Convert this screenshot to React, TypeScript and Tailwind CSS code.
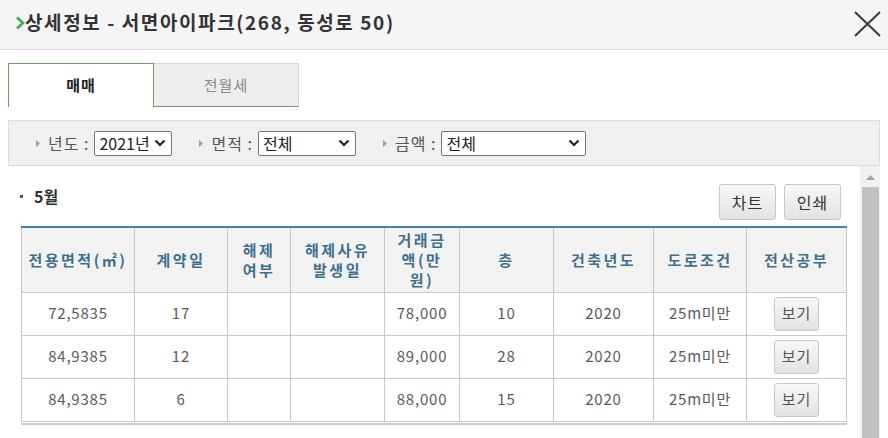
import React from "react";

const cols = [113, 93, 63, 94, 75, 94, 100, 93, 100];

const headers: React.ReactNode[] = [
  "전용면적(㎡)",
  "계약일",
  <>해제<br />여부</>,
  <>해제사유<br />발생일</>,
  <>거래금<br />액(만<br />원)</>,
  "층",
  "건축년도",
  "도로조건",
  "전산공부",
];

const rows = [
  ["72,5835", "17", "", "", "78,000", "10", "2020", "25m미만"],
  ["84,9385", "12", "", "", "89,000", "28", "2020", "25m미만"],
  ["84,9385", "6", "", "", "88,000", "15", "2020", "25m미만"],
];

function Tri() {
  return (
    <svg width="6" height="9" viewBox="0 0 6 9" className="mr-[7px]">
      <path d="M1 1 L5 4.5 L1 8 Z" fill="#a0a0a0" />
    </svg>
  );
}

function Chevron() {
  return (
    <svg width="12" height="8" viewBox="0 0 12 8">
      <path d="M1.5 1.5 L6 6 L10.5 1.5" fill="none" stroke="#222" strokeWidth="2.2" />
    </svg>
  );
}

function Select({ value, width }: { value: string; width: string }) {
  return (
    <div className={`${width} h-[25px] bg-white border border-[#767676] rounded-[2px] flex items-center justify-between pl-[4px] pr-[5px] text-[16px] text-[#222]`}>
      <span>{value}</span>
      <Chevron />
    </div>
  );
}

export default function App() {
  return (
    <div
      className="w-[888px] h-[438px] bg-white overflow-hidden flex flex-col"
      style={{ fontFamily: '"Noto Sans CJK KR", "Noto Sans", sans-serif' }}
    >
      {/* header */}
      <div className="h-[50px] shrink-0 bg-[#f5f5f7] border-b border-[#dcdcdc] flex items-center justify-between pl-[15px] pr-[6px]">
        <div className="flex items-center text-[19px] font-bold text-[#333] tracking-[1.6px] pb-[4px]">
          <svg width="10" height="14" viewBox="0 0 10 14">
            <path d="M2 1.5 L8 7 L2 12.5" fill="none" stroke="#3cae4b" strokeWidth="2.6" />
          </svg>
          <span>상세정보 - 서면아이파크(268, 동성로 50)</span>
        </div>
        <svg width="30" height="30" viewBox="0 0 30 30" className="mb-[2px]">
          <path d="M3 3 L28 27 M28 3 L3 27" stroke="#3a3a3a" strokeWidth="2" />
        </svg>
      </div>

      {/* body */}
      <div className="flex-1 flex flex-col pl-[8px] pr-[8px] pt-[13px] min-h-0">
        {/* tabs */}
        <div className="flex h-[44px] shrink-0">
          <div className="w-[146px] border-t border-l border-r border-[#6a9f5f] bg-white flex items-center justify-center text-[15px] font-bold text-[#222] tracking-[1px]">
            매매
          </div>
          <div className="w-[145px] bg-[#eeeeee] border-t border-r border-[#d6d6d6] border-b-[1px] border-b-[#6a9f5f] flex items-center justify-center text-[15px] text-[#888] tracking-[1px]">
            전월세
          </div>
        </div>

        {/* filter bar */}
        <div className="mt-[13px] h-[46px] shrink-0 bg-[#f0f0f0] border border-[#dcdcdc] flex items-center pl-[26px] text-[16px] text-[#555]">
          <div className="flex items-center">
            <Tri />
            <span className="mr-[5px] tracking-[1px]">년도 :</span>
            <Select value="2021년" width="w-[78px]" />
          </div>
          <div className="flex items-center ml-[26px]">
            <Tri />
            <span className="mr-[5px] tracking-[1px]">면적 :</span>
            <Select value="전체" width="w-[98px]" />
          </div>
          <div className="flex items-center ml-[26px]">
            <Tri />
            <span className="mr-[5px] tracking-[1px]">금액 :</span>
            <Select value="전체" width="w-[145px]" />
          </div>
        </div>

        {/* scroll area */}
        <div className="flex-1 flex min-h-0">
          <div className="flex-1 pl-[13px] pr-[6px] min-w-0">
            <div className="flex items-end justify-between h-[60px]">
              <div className="flex items-center self-start mt-[18px] text-[16px] font-bold text-[#333]">
                <span className="w-[3px] h-[3px] bg-[#555] mr-[11px] ml-[-1px]"></span>
                5월
              </div>
              <div className="flex gap-[8px] mb-[6px] pr-[13px]">
                {["차트", "인쇄"].map((t) => (
                  <div
                    key={t}
                    className="w-[57px] h-[36px] rounded-[3px] border border-[#c8c8c8] bg-gradient-to-b from-[#f8f8f8] to-[#e2e2e2] flex items-center justify-center text-[16px] text-[#333] tracking-[1px]"
                  >
                    {t}
                  </div>
                ))}
              </div>
            </div>
            <table className="border-collapse table-fixed w-[826px] border-t-[2px] border-t-[#3d86b4]">
              <colgroup>
                {cols.map((w, i) => (
                  <col key={i} style={{ width: w }} />
                ))}
              </colgroup>
              <thead>
                <tr className="h-[65px] bg-[#f2f2f2]">
                  {headers.map((h, i) => (
                    <th
                      key={i}
                      className="border border-[#c8c8c8] border-t-0 text-[15px] leading-[20px] font-bold text-[#3f6f8e] tracking-[2.5px] px-0"
                    >
                      {h}
                    </th>
                  ))}
                </tr>
              </thead>
              <tbody>
                {rows.map((r, ri) => (
                  <tr key={ri} className="h-[43px]">
                    {r.map((c, ci) => (
                      <td
                        key={ci}
                        className="border border-[#c8c8c8] text-center text-[15px] text-[#5a5a5a] tracking-[0.8px]"
                      >
                        {c}
                      </td>
                    ))}
                    <td className="border border-[#c8c8c8] text-center">
                      <div className="inline-flex w-[45px] h-[34px] rounded-[3px] border border-[#c8c8c8] bg-gradient-to-b from-[#f8f8f8] to-[#e2e2e2] items-center justify-center text-[15px] text-[#555] align-middle tracking-[1px]">
                        보기
                      </div>
                    </td>
                  </tr>
                ))}
              </tbody>
            </table>
            <div className="w-[826px] h-[2px] mt-[1px] bg-[#cccccc]"></div>
          </div>
          {/* scrollbar */}
          <div className="w-[20px] shrink-0 bg-[#f1f1f1] flex flex-col items-center">
            <div className="h-[21px] w-full flex items-center justify-center pt-[2px]">
              <svg width="9" height="5" viewBox="0 0 9 5">
                <path d="M0 5 L4.5 0 L9 5 Z" fill="#a3a3a3" />
              </svg>
            </div>
            <div className="w-[17px] flex-1 bg-[#c1c1c1]"></div>
          </div>
        </div>
      </div>
    </div>
  );
}
